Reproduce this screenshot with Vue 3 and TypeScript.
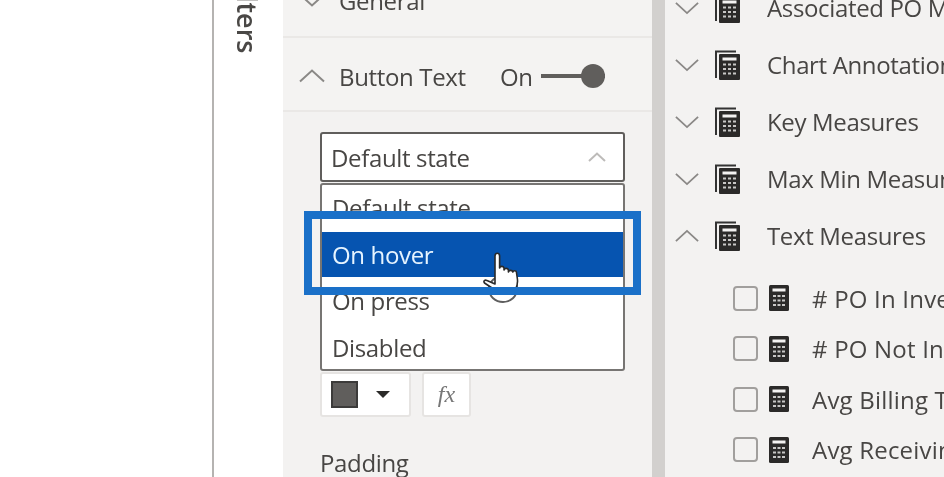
<script setup lang="ts">
const groups = [
  { name: 'Associated PO Measures', open: false },
  { name: 'Chart Annotations', open: false },
  { name: 'Key Measures', open: false },
  { name: 'Max Min Measures', open: false },
  { name: 'Text Measures', open: true },
]
const measures = ['# PO In Inventory', '# PO Not In Inventory', 'Avg Billing Time', 'Avg Receiving Time']
const options = ['Default state', 'On hover', 'On press', 'Disabled']
</script>

<template>
  <div class="screen">
    <div class="canvas"></div>

    <div class="filters-tab">
      <span class="filters-label">Filters</span>
    </div>

    <section class="format-pane">
      <div class="section-row general">
        <svg class="chev" viewBox="0 0 26 14"><path d="M1 1.5 13 12.5 25 1.5" /></svg>
        <span>General</span>
      </div>
      <div class="section-row button-text">
        <svg class="chev" viewBox="0 0 26 14"><path d="M1 12.5 13 1.5 25 12.5" /></svg>
        <span class="section-title">Button Text</span>
        <span class="on-label">On</span>
        <span class="toggle"><i></i></span>
      </div>

      <div class="section-body">
        <div class="select-wrap">
          <div class="select">
            <span>Default state</span>
            <svg class="select-chev" viewBox="0 0 18 10"><path d="M1 9 9 1.5 17 9" /></svg>
          </div>
          <ul class="menu">
            <li v-for="o in options" :key="o" :class="{ active: o === 'On hover' }">{{ o }}</li>
          </ul>
          <svg class="cursor" viewBox="0 0 40 51">
            <ellipse cx="20" cy="37" rx="14" ry="13" fill="none" stroke="#5e5e5e" stroke-width="2" />
            <path d="M12 4c0-3.6 4.6-3.6 4.6 0v12c.4-2.2 4-2.2 4.4 0v2c.4-2.2 4-2.2 4.4 0v2c.4-2.2 4-2.2 4.4 0 .3-1.6 3.4-1.6 3.6 0l1 7c.6 5-.5 8-2 11H12L1.5 31c-1.5-2 .5-3.6 2.5-2.4l8 3.4Z" fill="#fff" stroke="#2a2a2a" stroke-width="1.6" stroke-linejoin="round" />
          </svg>
          <div class="highlight"></div>
        </div>
        <div class="color-row">
          <button class="color-btn"><span class="swatch"></span><span class="caret"></span></button>
          <button class="fx-btn">fx</button>
        </div>
        <div class="padding-label">Padding</div>
      </div>
    </section>

    <div class="splitter"></div>

    <section class="fields-pane">
      <div v-for="g in groups" :key="g.name" class="group-row">
        <svg class="chev" viewBox="0 0 26 14">
          <path :d="g.open ? 'M1 12.5 13 1.5 25 12.5' : 'M1 1.5 13 12.5 25 1.5'" />
        </svg>
        <svg class="table-icon" viewBox="0 0 25 30">
          <path d="M1 28V1.5h20" fill="none" stroke="#333" stroke-width="2" />
          <rect x="4" y="4" width="21" height="26" rx="1" fill="#2b2a29" />
          <rect x="7.5" y="7.5" width="14" height="3" fill="#f3f2f1" />
          <path d="M8 14.5h13M8 19h13M8 23.5h13" stroke="#c8c7c6" stroke-width="2" stroke-dasharray="3 2" />
        </svg>
        <span class="group-name">{{ g.name }}</span>
      </div>
      <div class="measures">
        <div v-for="m in measures" :key="m" class="measure-row">
          <span class="check"></span>
          <svg class="calc-icon" viewBox="0 0 20 26">
            <rect width="20" height="26" rx="1.5" fill="#2b2a29" />
            <rect x="3.5" y="3.5" width="13" height="3" fill="#f3f2f1" />
            <path d="M4 11h12M4 15.5h12M4 20h12" stroke="#c8c7c6" stroke-width="2" stroke-dasharray="3 1.5" />
          </svg>
          <span class="measure-name">{{ m }}</span>
        </div>
      </div>
    </section>
  </div>
</template>

<style>
html, body { margin: 0; background: #fff; }
</style>

<style scoped>
.screen {
  display: flex;
  width: 944px;
  height: 477px;
  overflow: hidden;
  background: #fff;
  color: #484644;
  font-family: "Open Sans", "Noto Sans", sans-serif;
  font-size: 24px;
  letter-spacing: -0.35px;
  filter: blur(0.4px);
}
.canvas {
  width: 212px;
  flex: none;
  border-right: 2px solid #b5b3b1;
}
.filters-tab {
  width: 69px;
  flex: none;
  background: #fff;
}
.filters-label {
  display: block;
  margin: -27px 0 0 18px;
  writing-mode: vertical-rl;
  font-size: 27px;
  font-weight: 600;
  line-height: 30px;
  color: #4a4846;
  white-space: nowrap;
  letter-spacing: 0;
}
.format-pane {
  width: 369px;
  flex: none;
  background: #f3f2f1;
  margin-top: -36px;
}
.section-row {
  display: flex;
  align-items: center;
  box-sizing: border-box;
  height: 74px;
  padding-left: 16px;
  border-bottom: 2px solid #eae8e6;
  background: #f4f3f2;
}
.chev {
  width: 26px;
  height: 14px;
  flex: none;
  fill: none;
  stroke: #8a8886;
  stroke-width: 2;
}
.section-row .chev { margin-right: 14px; }
.button-text { padding-top: 4px; }
.section-title { width: 161px; }
.on-label { width: 41px; }
.toggle {
  position: relative;
  display: block;
  width: 64px;
  height: 4px;
  background: #605e5c;
}
.toggle i {
  position: absolute;
  right: 0;
  top: -10px;
  width: 24px;
  height: 24px;
  border-radius: 50%;
  background: #605e5c;
}
.section-body {
  padding: 20px 0 0 37px;
}
.select-wrap {
  position: relative;
  width: 305px;
  height: 240px;
}
.select {
  display: flex;
  align-items: center;
  justify-content: space-between;
  box-sizing: border-box;
  height: 50px;
  padding: 0 17px 0 9px;
  background: #fff;
  border: 2px solid #605e5c;
  border-radius: 3px;
}
.select-chev {
  width: 18px;
  height: 10px;
  fill: none;
  stroke: #bdbbb9;
  stroke-width: 2;
}
.menu {
  position: absolute;
  left: 0;
  top: 51px;
  z-index: 1;
  box-sizing: border-box;
  width: 305px;
  height: 188px;
  margin: 0;
  padding: 0;
  list-style: none;
  background: #fff;
  border: 2px solid #777573;
  border-radius: 3px;
}
.menu li {
  height: 46.5px;
  line-height: 48px;
  padding-left: 10px;
}
.menu li:first-child { line-height: 46px; }
.menu li.active {
  height: 45.5px;
  line-height: 45px;
  background: #0654b0;
  color: #e6f4ff;
}
.cursor {
  position: absolute;
  left: 163px;
  top: 120px;
  z-index: 2;
  width: 40px;
  height: 51px;
}
.highlight {
  position: absolute;
  left: -16px;
  top: 79px;
  z-index: 3;
  box-sizing: border-box;
  width: 337px;
  height: 84px;
  border: 8px solid #1a70c8;
}
.color-row {
  display: flex;
  gap: 11px;
  height: 45px;
}
.color-btn, .fx-btn {
  box-sizing: border-box;
  height: 45px;
  padding: 0;
  background: #fff;
  border: 2px solid #e6e4e2;
  border-radius: 3px;
}
.color-btn {
  display: flex;
  align-items: center;
  width: 91px;
  padding-left: 9px;
}
.swatch {
  width: 27px;
  height: 27px;
  box-sizing: border-box;
  background: #605e5c;
  border: 2px solid #3c3b3a;
}
.caret {
  margin-left: 18px;
  border-left: 7px solid transparent;
  border-right: 7px solid transparent;
  border-top: 7px solid #2b2a29;
}
.fx-btn {
  width: 49px;
  font-family: "Liberation Serif", serif;
  font-style: italic;
  font-size: 24px;
  color: #777;
}
.padding-label {
  margin-top: 29px;
}
.splitter {
  width: 13px;
  flex: none;
  background: #d2d0ce;
}
.fields-pane {
  flex: 1;
  min-width: 0;
  background: #f3f2f1;
  margin-top: -21px;
  white-space: nowrap;
  overflow: hidden;
}
.group-row {
  display: flex;
  align-items: center;
  height: 57px;
  padding-left: 10px;
}
.group-row .chev { width: 24px; margin-right: 16px; }
.table-icon { width: 25px; height: 30px; flex: none; margin-right: 27px; }
.measures { padding-top: 9px; }
.measure-row {
  display: flex;
  align-items: center;
  height: 50.5px;
  padding-left: 68px;
}
.check {
  box-sizing: border-box;
  width: 25px;
  height: 25px;
  flex: none;
  border: 2px solid #a19f9d;
  border-radius: 4px;
  margin-right: 11px;
}
.calc-icon { width: 20px; height: 26px; flex: none; margin-right: 23px; }
.measure-name { letter-spacing: 0.2px; }
</style>
